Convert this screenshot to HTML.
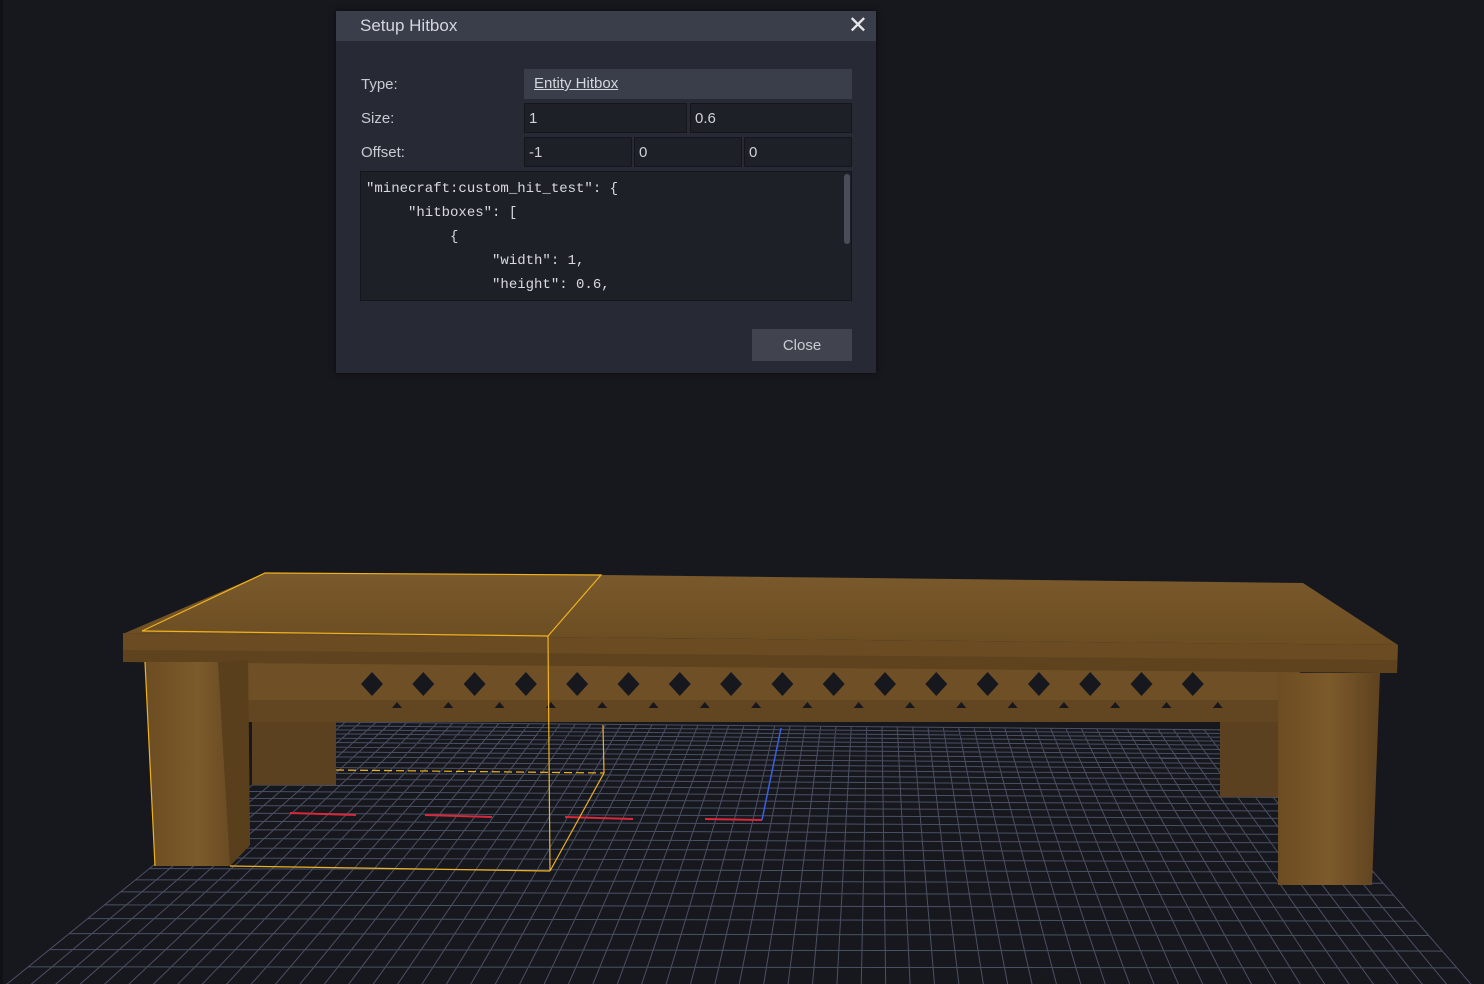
<!DOCTYPE html>
<html><head><meta charset="utf-8"><style>
html,body{margin:0;padding:0;background:#17181e;width:1484px;height:984px;overflow:hidden;font-family:"Liberation Sans",sans-serif}
#scene{position:absolute;left:0;top:0}
.dlg{position:absolute;left:336px;top:11px;width:540px;height:362px;background:#272a34;box-shadow:0 0 6px rgba(0,0,0,.6)}
.hd{height:30px;background:#3a3d4a;color:#d4d6dd;font-size:17px;line-height:30px;padding-left:24px}
.x{position:absolute;right:8px;top:3px;color:#e6e6ea;font-size:24px;line-height:24px}
.lbl{position:absolute;left:25px;color:#c9cbd2;font-size:15px}
.fld{position:absolute;background:#1e2028;border:1px solid #15161c;color:#d0d2d8;font-size:15px;line-height:30px;padding-left:4px;box-sizing:border-box;height:30px}
.code{position:absolute;left:24px;top:160px;width:492px;height:130px;background:#1e2028;border:1px solid #15161c;box-sizing:border-box;font-family:"Liberation Mono",monospace;font-size:14px;color:#d8dae0;line-height:24px;padding:5px 0 0 5px;white-space:pre;overflow:hidden}
.sb{position:absolute;right:1px;top:2px;width:6px;height:70px;background:#4a4d58;border-radius:3px}
.btn{position:absolute;left:416px;top:318px;width:100px;height:32px;background:#41444f;color:#c9cbd2;font-size:15px;text-align:center;line-height:33px}
</style></head><body>
<svg id="scene" width="1484" height="984" xmlns="http://www.w3.org/2000/svg">
<rect x="0" y="0" width="3" height="984" fill="#101116"/>
<g id="grid" stroke="#4a5064" stroke-width="1" fill="none"></g>
<line x1="290" y1="813" x2="356" y2="815" stroke="#d8283a" stroke-width="2"/>
<line x1="425" y1="815" x2="492" y2="817" stroke="#d8283a" stroke-width="2"/>
<line x1="565" y1="817" x2="633" y2="819" stroke="#d8283a" stroke-width="2"/>
<line x1="705" y1="819" x2="762" y2="820" stroke="#d8283a" stroke-width="2"/>
<line x1="762" y1="820" x2="781" y2="728" stroke="#3a5fe0" stroke-width="1.5"/>
<defs>
<linearGradient id="top" x1="0" y1="0" x2="0" y2="1"><stop offset="0" stop-color="#7a5a2c"/><stop offset="1" stop-color="#6b4d22"/></linearGradient>
<linearGradient id="leg" x1="0" y1="0" x2="1" y2="0"><stop offset="0" stop-color="#6c4c22"/><stop offset=".5" stop-color="#7c5a2a"/><stop offset="1" stop-color="#5e4220"/></linearGradient>
</defs>
<rect x="252" y="715" width="84" height="70" fill="#5c4120"/>
<rect x="1220" y="720" width="80" height="77" fill="#5c4120"/>
<rect x="215" y="660" width="1085" height="62" fill="#6f5026"/>
<rect x="215" y="700" width="1085" height="22" fill="#624621"/>
<g fill="#17181e" id="dia"></g>
<polygon points="265,573 601,575 1303,583 1398,645 125,633" fill="url(#top)"/>
<polygon points="123,633 1398,645 1397,673 123,662" fill="#6a4b22"/>
<polygon points="123,650 1397,660 1397,673 123,662" fill="#5e431e"/>
<polygon points="145,662 218,662 248,660 250,845 230,866 155,866" fill="url(#leg)"/>
<polygon points="218,662 248,660 250,845 230,866" fill="#5a3f1c"/>
<polygon points="1278,673 1380,673 1372,885 1278,885" fill="url(#leg)"/>
<g stroke="#f0b21e" stroke-width="1.2" fill="none">
<polyline points="142,631 265,573 601,575 548,636 142,631"/>
<line x1="548" y1="636" x2="550" y2="871"/>
<line x1="603" y1="725" x2="604" y2="773"/>
<line x1="604" y1="773" x2="550" y2="871"/>
<line x1="145" y1="662" x2="155" y2="866"/>
<polyline points="230,866 550,871"/>
<line x1="336" y1="770" x2="604" y2="773" stroke-dasharray="8 4"/>
</g>
</svg>
<div class="dlg">
<div class="hd">Setup Hitbox</div><div class="x">✕</div>
<div class="lbl" style="top:65px">Type:</div>
<div class="fld" style="left:188px;top:58px;width:328px;background:#3a3d4a;border:none;padding-left:10px;text-decoration:underline;color:#d4d6dd">Entity Hitbox</div>
<div class="lbl" style="top:99px">Size:</div>
<div class="fld" style="left:188px;top:92px;width:163px">1</div>
<div class="fld" style="left:354px;top:92px;width:162px">0.6</div>
<div class="lbl" style="top:133px">Offset:</div>
<div class="fld" style="left:188px;top:126px;width:108px">-1</div>
<div class="fld" style="left:298px;top:126px;width:108px">0</div>
<div class="fld" style="left:408px;top:126px;width:108px">0</div>
<div class="code">"minecraft:custom_hit_test": {
     "hitboxes": [
          {
               "width": 1,
               "height": 0.6,<div class="sb"></div></div>
<div class="btn">Close</div>
</div>
<script>
(function(){
var g=document.getElementById('grid'),ns='http://www.w3.org/2000/svg';
var BL=[330,722],BR=[1250,730],FL=[-20,1006],FR=[1490,1006],k=1.4;
function P(u,z){var t=z*(1+k)/(1+k*z);var l=[FL[0]+(BL[0]-FL[0])*t,FL[1]+(BL[1]-FL[1])*t];var r=[FR[0]+(BR[0]-FR[0])*t,FR[1]+(BR[1]-FR[1])*t];return[l[0]+(r[0]-l[0])*u,l[1]+(r[1]-l[1])*u];}
var N=60,M=32,s='';
for(var i=0;i<=N;i++){var a=P(i/N,0),b=P(i/N,1);s+='M'+a[0].toFixed(1)+' '+a[1].toFixed(1)+'L'+b[0].toFixed(1)+' '+b[1].toFixed(1);}
for(var j=0;j<=M;j++){var a=P(0,j/M),b=P(1,j/M);s+='M'+a[0].toFixed(1)+' '+a[1].toFixed(1)+'L'+b[0].toFixed(1)+' '+b[1].toFixed(1);}
var p=document.createElementNS(ns,'path');p.setAttribute('d',s);g.appendChild(p);
var d=document.getElementById('dia'),q='';
for(var x=372;x<1200;x+=51.3){q+='M'+x+' 672L'+(x+11)+' 684L'+x+' 696L'+(x-11)+' 684Z';q+='M'+(x+25)+' 702L'+(x+30)+' 708L'+(x+20)+' 708Z';}
var p2=document.createElementNS(ns,'path');p2.setAttribute('d',q);d.appendChild(p2);
})();
</script>
</body></html>
